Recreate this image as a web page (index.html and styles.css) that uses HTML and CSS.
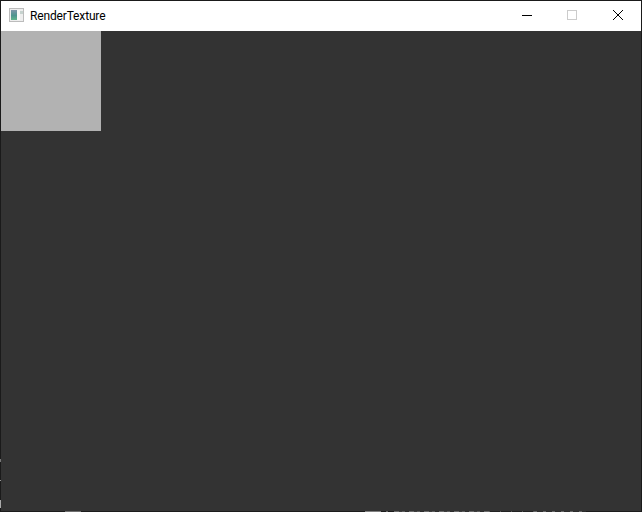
FILE: index.html
```html
<!DOCTYPE html>
<html lang="en">
<head>
<meta charset="utf-8">
<title>RenderTexture</title>
<link rel="stylesheet" href="styles.css">
</head>
<body>
<div class="window">
  <header class="titlebar">
    <svg class="app-icon" width="16" height="16" viewBox="0 0 16 16" aria-hidden="true">
      <defs>
        <linearGradient id="pane" x1="0" y1="0" x2="0" y2="1">
          <stop offset="0" stop-color="#7f95aa"/>
          <stop offset="0.55" stop-color="#4f9490"/>
          <stop offset="1" stop-color="#62b48c"/>
        </linearGradient>
      </defs>
      <rect x="0.5" y="1.5" width="14" height="13" fill="#eeeeee" stroke="#bcbcbc"/>
      <rect x="2" y="3" width="6" height="10" fill="url(#pane)"/>
      <rect x="8" y="3" width="3" height="10" fill="#fafafa"/>
      <rect x="11" y="4" width="3" height="3" fill="#c6d2ce"/>
    </svg>
    <span class="title">RenderTexture</span>
    <div class="controls">
      <span class="control control-min">
        <svg width="10" height="10" viewBox="0 0 10 10" aria-hidden="true"><path d="M0 5.5H10" stroke="#000"/></svg>
      </span>
      <span class="control">
        <svg width="10" height="10" viewBox="0 0 10 10" aria-hidden="true"><rect x="0.5" y="0.5" width="9" height="9" fill="none" stroke="#ccc"/></svg>
      </span>
      <span class="control">
        <svg width="10" height="10" viewBox="0 0 10 10" aria-hidden="true"><path d="M0 0L10 10M10 0L0 10" stroke="#000" stroke-width="1"/></svg>
      </span>
    </div>
  </header>
  <main class="viewport">
    <div class="texture"></div>
    <div class="edge-marks"></div>
    <div class="bottom-marks"></div>
  </main>
</div>
</body>
</html>
```
FILE: styles.css
```css
html, body {
  margin: 0;
  padding: 0;
  width: 642px;
  height: 512px;
  overflow: hidden;
  background: #333;
}
.window {
  box-sizing: border-box;
  width: 642px;
  height: 512px;
  border: 1px solid #1a1a1a;
  border-bottom: 0;
  display: flex;
  flex-direction: column;
}
.titlebar {
  height: 30px;
  flex: none;
  background: #fff;
  display: flex;
  align-items: center;
  padding-left: 8px;
  font: 12px Roboto, "Noto Sans", sans-serif;
  letter-spacing: -0.15px;
  color: #000;
}
.app-icon { flex: none; margin-right: 5px; margin-top: -2px; }
.title { flex: 1; }
.controls { display: flex; }
.control {
  box-sizing: border-box;
  width: 46px;
  height: 30px;
  padding-bottom: 2px;
  display: flex;
  align-items: center;
  justify-content: center;
}
.control-min { padding-left: 2px; }
.viewport {
  flex: 1;
  position: relative;
  background: #333;
}
.texture {
  width: 100px;
  height: 100px;
  background: #b2b2b2;
}
.edge-marks {
  position: absolute;
  left: -1px;
  top: 428px;
  width: 1px;
  height: 53px;
  background:
    linear-gradient(#777, #777) 0 0 / 1px 3px no-repeat,
    linear-gradient(#999, #999) 0 21px / 1px 1px no-repeat,
    linear-gradient(#aaa, #aaa) 0 41px / 1px 8px no-repeat;
}
.bottom-marks {
  position: absolute;
  left: 0;
  bottom: 0;
  width: 640px;
  height: 1px;
  background:
    linear-gradient(#6e6e6e, #6e6e6e) 64px 0 / 16px 1px no-repeat,
    linear-gradient(#808080, #808080) 364px 0 / 16px 1px no-repeat,
    linear-gradient(#666, #666) 385px 0 / 2px 1px no-repeat,
    repeating-linear-gradient(90deg, #6a6a6a 0 5px, #3c3c3c 5px 8px, #5c5c5c 8px 11px, #2c2c2c 11px 15px) 393px 0 / 95px 1px no-repeat,
    repeating-linear-gradient(90deg, #555 0 1px, #222 1px 11px) 488px 0 / 45px 1px no-repeat,
    repeating-linear-gradient(90deg, #666 0 3px, #2c2c2c 3px 9px) 533px 0 / 52px 1px no-repeat,
    #1c1c1c;
}
```
